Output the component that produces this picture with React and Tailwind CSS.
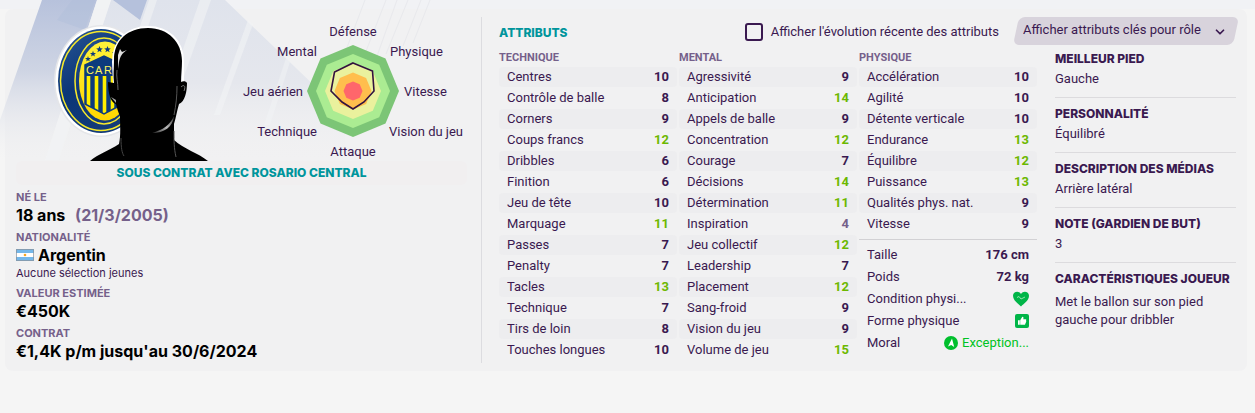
import { FiChevronDown } from 'react-icons/fi'

const technique = [
  ['Centres', 10],
  ['Contrôle de balle', 8],
  ['Corners', 9],
  ['Coups francs', 12],
  ['Dribbles', 6],
  ['Finition', 6],
  ['Jeu de tête', 10],
  ['Marquage', 11],
  ['Passes', 7],
  ['Penalty', 7],
  ['Tacles', 13],
  ['Technique', 7],
  ['Tirs de loin', 8],
  ['Touches longues', 10],
]

const mental = [
  ['Agressivité', 9],
  ['Anticipation', 14],
  ['Appels de balle', 9],
  ['Concentration', 12],
  ['Courage', 7],
  ['Décisions', 14],
  ['Détermination', 11],
  ['Inspiration', 4],
  ['Jeu collectif', 12],
  ['Leadership', 7],
  ['Placement', 12],
  ['Sang-froid', 9],
  ['Vision du jeu', 9],
  ['Volume de jeu', 15],
]

const physique = [
  ['Accélération', 10],
  ['Agilité', 10],
  ['Détente verticale', 10],
  ['Endurance', 13],
  ['Équilibre', 12],
  ['Puissance', 13],
  ['Qualités phys. nat.', 9],
  ['Vitesse', 9],
]

const details = [
  ['Meilleur pied', 'Gauche'],
  ['Personnalité', 'Équilibré'],
  ['Description des médias', 'Arrière latéral'],
  ['Note (gardien de but)', '3'],
]

const valueColor = (value) => {
  if (value > 10) return 'text-[#6cb800]'
  if (value < 6) return 'text-[#75608a]'
  return 'text-[#3a1950]'
}

const octagon = (r) =>
  Array.from({ length: 8 }, (_, i) => {
    const a = (i * Math.PI) / 4
    return `${(110 + r * Math.sin(a)).toFixed(1)},${(71 - r * Math.cos(a)).toFixed(1)}`
  }).join(' ')

const star = (cx, cy, r) =>
  Array.from({ length: 10 }, (_, i) => {
    const a = (i * Math.PI) / 5
    const d = i % 2 ? r * 0.42 : r
    return `${(cx + d * Math.sin(a)).toFixed(1)},${(cy - d * Math.cos(a)).toFixed(1)}`
  }).join(' ')

const Backdrop = () => (
  <svg className="absolute left-0 top-0" width="620" height="200" viewBox="0 0 620 200" aria-hidden="true">
    <defs>
      <linearGradient id="band" x1="0" y1="0" x2="0" y2="1">
        <stop offset="0" stopColor="#b7c2dc" />
        <stop offset="0.45" stopColor="#cfd5e4" />
        <stop offset="1" stopColor="#efeff1" stopOpacity="0" />
      </linearGradient>
      <linearGradient id="haze" x1="0" y1="0" x2="0" y2="1">
        <stop offset="0" stopColor="#dfe3ec" />
        <stop offset="0.5" stopColor="#e5e7ed" />
        <stop offset="1" stopColor="#f1f1f2" stopOpacity="0" />
      </linearGradient>
    </defs>
    <path d="M111 0H225L345 115V165H55Z" fill="url(#haze)" />
    <path d="M42 0H97L45 160H-14Z" fill="url(#band)" />
    <path d="M97 0H111L59 160H45Z" fill="#f1f2f4" opacity="0.8" />
    <path d="M72 0H95L85 30L57 20Z" fill="#b0bdda" opacity="0.4" />
    <path d="M113 0H147L140 20Z" fill="#b5c1dc" />
    <path d="M149 0H157L110 140H101Z" fill="#f2f3f5" opacity="0.6" />
    <path d="M200 0H211L165 130H155Z" fill="#f2f3f5" opacity="0.6" />
    <path d="M248 20L253 24L220 115H214Z" fill="#f2f3f5" opacity="0.6" />
    <path d="M286 58L290 62L270 125H264Z" fill="#f2f3f5" opacity="0.5" />
    <g stroke="#e3e4e9" opacity="0.6">
      <path d="M365 0L343 58M386 0L361 64M397 0L372 70M408 0L386 54M421 0L403 46M430 0L413 43" />
    </g>
  </svg>
)

const PlayerPortrait = () => (
  <svg className="h-[141px] w-[160px] shrink-0" viewBox="50 20 160 141" role="img" aria-label="Rosario Central">
    <defs>
      <linearGradient id="navy" x1="0" y1="0" x2="0.6" y2="1">
        <stop offset="0" stopColor="#2a5798" />
        <stop offset="0.5" stopColor="#0b3677" />
        <stop offset="1" stopColor="#143c79" />
      </linearGradient>
      <linearGradient id="gold" x1="0" y1="0" x2="0" y2="1">
        <stop offset="0" stopColor="#fff23a" />
        <stop offset="1" stopColor="#ffd600" />
      </linearGradient>
      <linearGradient id="jaw" x1="0" y1="1" x2="1" y2="0">
        <stop offset="0" stopColor="#222" />
        <stop offset="0.5" stopColor="#bbb" />
        <stop offset="1" stopColor="#333" />
      </linearGradient>
      <clipPath id="shield">
        <path d="M85 65L104 56L123 65V104L104 114L85 104Z" />
      </clipPath>
    </defs>

    <ellipse cx="101" cy="81" rx="47" ry="56" fill="#e5e6e9" />
    <ellipse cx="101" cy="81" rx="45.500" ry="54.500" fill="#fff" />
    <ellipse cx="101" cy="81" rx="43" ry="52" fill="url(#navy)" />
    <ellipse cx="101" cy="81" rx="40.500" ry="49.500" fill="none" stroke="#f6e92c" strokeWidth="1.500" />
    <ellipse cx="104" cy="81" rx="29" ry="43" fill="url(#navy)" stroke="#f6e92c" strokeWidth="1.500" />
    <ellipse cx="105" cy="81" rx="26" ry="39.500" fill="url(#gold)" />
    <g fill="#0d3b7d">
      <polygon points={star(88, 59, 3)} />
      <polygon points={star(93, 54, 3.2)} />
      <polygon points={star(99.5, 49.5, 3.5)} />
      <polygon points={star(107.5, 49.5, 3.5)} />
      <polygon points={star(115, 53, 3.2)} />
    </g>
    <g clipPath="url(#shield)">
      <rect x="84" y="55" width="40" height="60" fill="#0d3b7d" />
      <path d="M88.500 76V112M96.500 76V112M104.500 76V114M112.500 76V114" stroke="#fff000" strokeWidth="3.600" />
    </g>
    <path d="M85 65L104 56L123 65V104L104 114L85 104Z" fill="none" stroke="#0d3b7d" strokeWidth="1.500" />
    <g fontSize="11" className="font-['Liberation_Sans']" fill="#fff45a">
      <text x="86" y="74">C</text>
      <text x="95" y="74">A</text>
      <text x="104" y="74">R</text>
    </g>

    <path
      d="M114 84L113 62C113 40 128 27 148 27S183 40 183 62V82"
      fill="none"
      stroke="#fff"
      strokeWidth="2"
    />
    <path
      d="M90 161C98 154 110 150 119 144C121 135 120 126 120 116C118 112 117 108 116 104C111 103 108 94 108 82L114 83C113 75 114 68 114 60C114 40 128 28 148 28S182 42 182 61C182 68 181 75 181 82C183 81 186 81 187 83C187 91 185 102 179 104C177 111 176 117 174 124V140C184 149 198 153 208 161Z"
      fill="#000"
    />
    <path d="M118 55L120 49L122 52L127 50C122 53 120 57 119 62L118 69Z" fill="#ddd" />
    <path d="M117 70C116 77 118 82 118 90" fill="none" stroke="#666" strokeWidth="1" />
    <path d="M111 97L116 100V103Z" fill="#aaa" />
    <path d="M152 133C164 133 173 127 174 116C170 125 163 130 152 133Z" fill="url(#jaw)" />
    <path d="M177 86C177 97 176 105 174 115" fill="none" stroke="#555" />
    <path d="M181 87C184 84 186 86 184 91" fill="none" stroke="#777" />
    <path d="M174 131C174 142 174 148 176 157" fill="none" stroke="#555" />
    <path d="M121 138C121 148 122 153 124 156" fill="none" stroke="#444" />
  </svg>
)

const RadarChart = () => (
  <svg className="h-[141px] w-[224px] shrink-0" viewBox="0 0 224 141" role="img" aria-label="Profil du joueur">
    <polygon points={octagon(46)} fill="#7cc576" />
    <polygon points={octagon(37)} fill="#abec92" />
    <polygon points={octagon(28)} fill="#eaf19d" />
    <polygon points={octagon(18.5)} fill="#ffbe4d" />
    <polygon points={octagon(9.5)} fill="#ff666b" />
    <polygon
      points="110,43 129.500,51 131,71 121,82 110,89 99,82 88,71 91.500,52"
      fill="none"
      stroke="#32123f"
      strokeWidth="1.600"
    />
    <g className="fill-[#3a1950] font-['Roboto'] text-[13px]">
      <text x="110" y="16" textAnchor="middle">Défense</text>
      <text x="147" y="36">Physique</text>
      <text x="161" y="76">Vitesse</text>
      <text x="146" y="116">Vision du jeu</text>
      <text x="110" y="136" textAnchor="middle">Attaque</text>
      <text x="74" y="116" textAnchor="end">Technique</text>
      <text x="60" y="76" textAnchor="end">Jeu aérien</text>
      <text x="74" y="36" textAnchor="end">Mental</text>
    </g>
  </svg>
)

const Flag = () => (
  <svg className="h-3 w-[18px]" viewBox="0 0 18 12" aria-hidden="true">
    <rect width="18" height="12" fill="#74b7ea" />
    <rect y="4" width="18" height="4" fill="#fff" />
    <circle cx="9" cy="6" r="1.300" fill="#f5a623" />
    <rect x="0.500" y="0.500" width="17" height="11" fill="none" stroke="#8a9099" opacity="0.7" />
  </svg>
)

const AttributeTable = ({ title, rows }) => (
  <table className="w-full border-separate border-spacing-x-0 border-spacing-y-px">
    <caption className="h-4 text-left text-[11px] leading-4 font-bold text-[#75608a] uppercase">{title}</caption>
    <tbody>
      {rows.map(([name, value]) => (
        <tr key={name} className="group">
          <th
            scope="row"
            className="h-5 rounded-l pl-2 text-left leading-4 font-normal whitespace-nowrap group-odd:bg-[#ededef]"
          >
            {name}
          </th>
          <td
            className={`h-5 rounded-r pr-2 text-right leading-4 font-bold group-odd:bg-[#ededef] ${valueColor(value)}`}
          >
            {value}
          </td>
        </tr>
      ))}
    </tbody>
  </table>
)

const FactRow = ({ label, children }) => (
  <div className="flex h-[22px] items-center justify-between">
    <dt>{label}</dt>
    <dd className="flex items-center gap-1 font-bold">{children}</dd>
  </div>
)

const InfoLabel = ({ children }) => (
  <dt className="text-[11px] leading-4 font-bold text-[#75608a] uppercase">{children}</dt>
)

const PlayerSummary = () => (
  <section className="pr-3.5 pl-[11px]">
    <div className="flex items-end justify-between pt-[11px] pl-[34px]">
      <PlayerPortrait />
      <RadarChart />
    </div>
    <h2 className="rounded-md bg-[#f1eff0] text-center font-['Inter'] text-xs leading-6 font-extrabold text-[#00959c] uppercase">
      Sous contrat avec Rosario Central
    </h2>
    <dl className="pt-1 font-['Inter'] text-base leading-5 font-bold text-black">
      <InfoLabel>Né le</InfoLabel>
      <dd className="mb-1">
        18 ans <span className="ml-1.5 text-[#75608a]">(21/3/2005)</span>
      </dd>
      <InfoLabel>Nationalité</InfoLabel>
      <dd className="mb-1">
        <div className="flex items-center gap-1">
          <Flag />
          Argentin
        </div>
        <p className="text-[11px] leading-4 font-normal text-[#3a1950]">Aucune sélection jeunes</p>
      </dd>
      <InfoLabel>Valeur estimée</InfoLabel>
      <dd className="mb-1">€450K</dd>
      <InfoLabel>Contrat</InfoLabel>
      <dd>€1,4K p/m jusqu'au 30/6/2024</dd>
    </dl>
  </section>
)

const PhysicalFacts = () => (
  <dl className="mt-1 border-t border-[#d2d1d4] px-2 pt-1">
    <FactRow label="Taille">176 cm</FactRow>
    <FactRow label="Poids">72 kg</FactRow>
    <FactRow label="Condition physi...">
      <svg className="h-4 w-4" viewBox="0 0 16 16" role="img" aria-label="Excellente">
        <path d="M8 15.500C5 12.500 0 9.500 0 4.800C0 0.500 5.800 -0.800 8 3C10.200 -0.800 16 0.500 16 4.800C16 9.500 11 12.500 8 15.500Z" fill="#00b548" />
        <path d="M4 6.500L6 5.500L8 8L10 7L12 6" fill="none" stroke="#b9ebc9" strokeWidth="0.800" />
      </svg>
    </FactRow>
    <FactRow label="Forme physique">
      <svg className="h-3.5 w-3.5" viewBox="0 0 14 14" role="img" aria-label="Bonne">
        <rect width="14" height="14" rx="2" fill="#00b548" />
        <path d="M3 6.300H4.800V10.800H3ZM5.200 6.300L7.300 2.800C8.700 2.800 8.700 4 8.200 5.300H10.600C11.500 5.300 11.500 6.400 11 6.700C11.500 7.200 11.300 8 10.800 8.200C11.100 8.800 10.800 9.300 10.300 9.500C10.400 10.300 10 10.800 9.300 10.800H5.200Z" fill="#fff" />
      </svg>
    </FactRow>
    <FactRow label="Moral">
      <svg className="h-3.5 w-3.5" viewBox="0 0 14 14" aria-hidden="true">
        <circle cx="7" cy="7" r="7" fill="#00bf2d" />
        <path d="M8 2.500L10.200 11L7.200 9L4 10.500Z" fill="#fff" />
      </svg>
      <span className="font-normal text-[#00c322]">Exception...</span>
    </FactRow>
  </dl>
)

const PlayerDetails = () => (
  <dl className="pr-px">
    {details.map(([label, value]) => (
      <div key={label} className="mb-1.5 h-[49px] border-b border-[#dcdbde]">
        <dt className="font-['Inter'] text-xs leading-5 font-extrabold whitespace-nowrap uppercase">{label}</dt>
        <dd className="leading-5">{value}</dd>
      </div>
    ))}
    <dt className="font-['Inter'] text-xs leading-5 font-extrabold whitespace-nowrap uppercase">
      Caractéristiques joueur
    </dt>
    <dd className="pt-1 leading-[18px]">Met le ballon sur son pied gauche pour dribbler</dd>
  </dl>
)

const App = () => {
  return (
    <main className="relative min-h-screen bg-[#f5f5f5] pt-[9px] pr-2 pl-[5px] font-['Roboto','Liberation_Sans',sans-serif] text-[13px] text-[#3a1950]">
      <div className="absolute inset-x-0 top-0 h-[9px] bg-[#f1f2f5]" />
      <div className="relative rounded-lg bg-[#f1f1f2]">
        <div className="absolute -top-[9px] -left-[5px]">
          <Backdrop />
        </div>
        <div className="relative grid grid-cols-[476fr_766fr] pb-2">
          <PlayerSummary />
          <section className="mt-2 border-l border-[#dcdce0] pr-2.5 pb-0.5 pl-[17px]">
            <header className="flex h-7 items-center">
              <h2 className="mr-auto pt-1 font-['Inter'] text-xs font-extrabold text-[#00959c] uppercase">Attributs</h2>
              <label className="flex items-center gap-2 pt-0.5">
                <input
                  type="checkbox"
                  className="h-[18px] w-[18px] appearance-none rounded-[3px] border-2 border-[#3a1950] checked:bg-[#3a1950]"
                />
                Afficher l'évolution récente des attributs
              </label>
              <div className="relative -mr-0.5 ml-3.5 h-7 w-[226px]">
                <span className="absolute inset-x-[3px] inset-y-0 -skew-x-12 rounded-md bg-[#d8d3dc]" />
                <select
                  aria-label="Attributs affichés"
                  className="relative h-full w-full appearance-none bg-transparent pb-0.5 pl-2.5"
                >
                  <option>Afficher attributs clés pour rôle</option>
                </select>
                <FiChevronDown className="pointer-events-none absolute top-2 right-3 h-3.5 w-3.5 stroke-3" />
              </div>
            </header>
            <div className="grid grid-cols-[180fr_180fr_196fr_182fr] pt-1">
              <div className="pt-px pr-0.5">
                <AttributeTable title="Technique" rows={technique} />
              </div>
              <div className="pt-px pr-0.5">
                <AttributeTable title="Mental" rows={mental} />
              </div>
              <div className="pt-px pr-[18px]">
                <AttributeTable title="Physique" rows={physique} />
                <PhysicalFacts />
              </div>
              <PlayerDetails />
            </div>
          </section>
        </div>
      </div>
    </main>
  )
}

export default App
